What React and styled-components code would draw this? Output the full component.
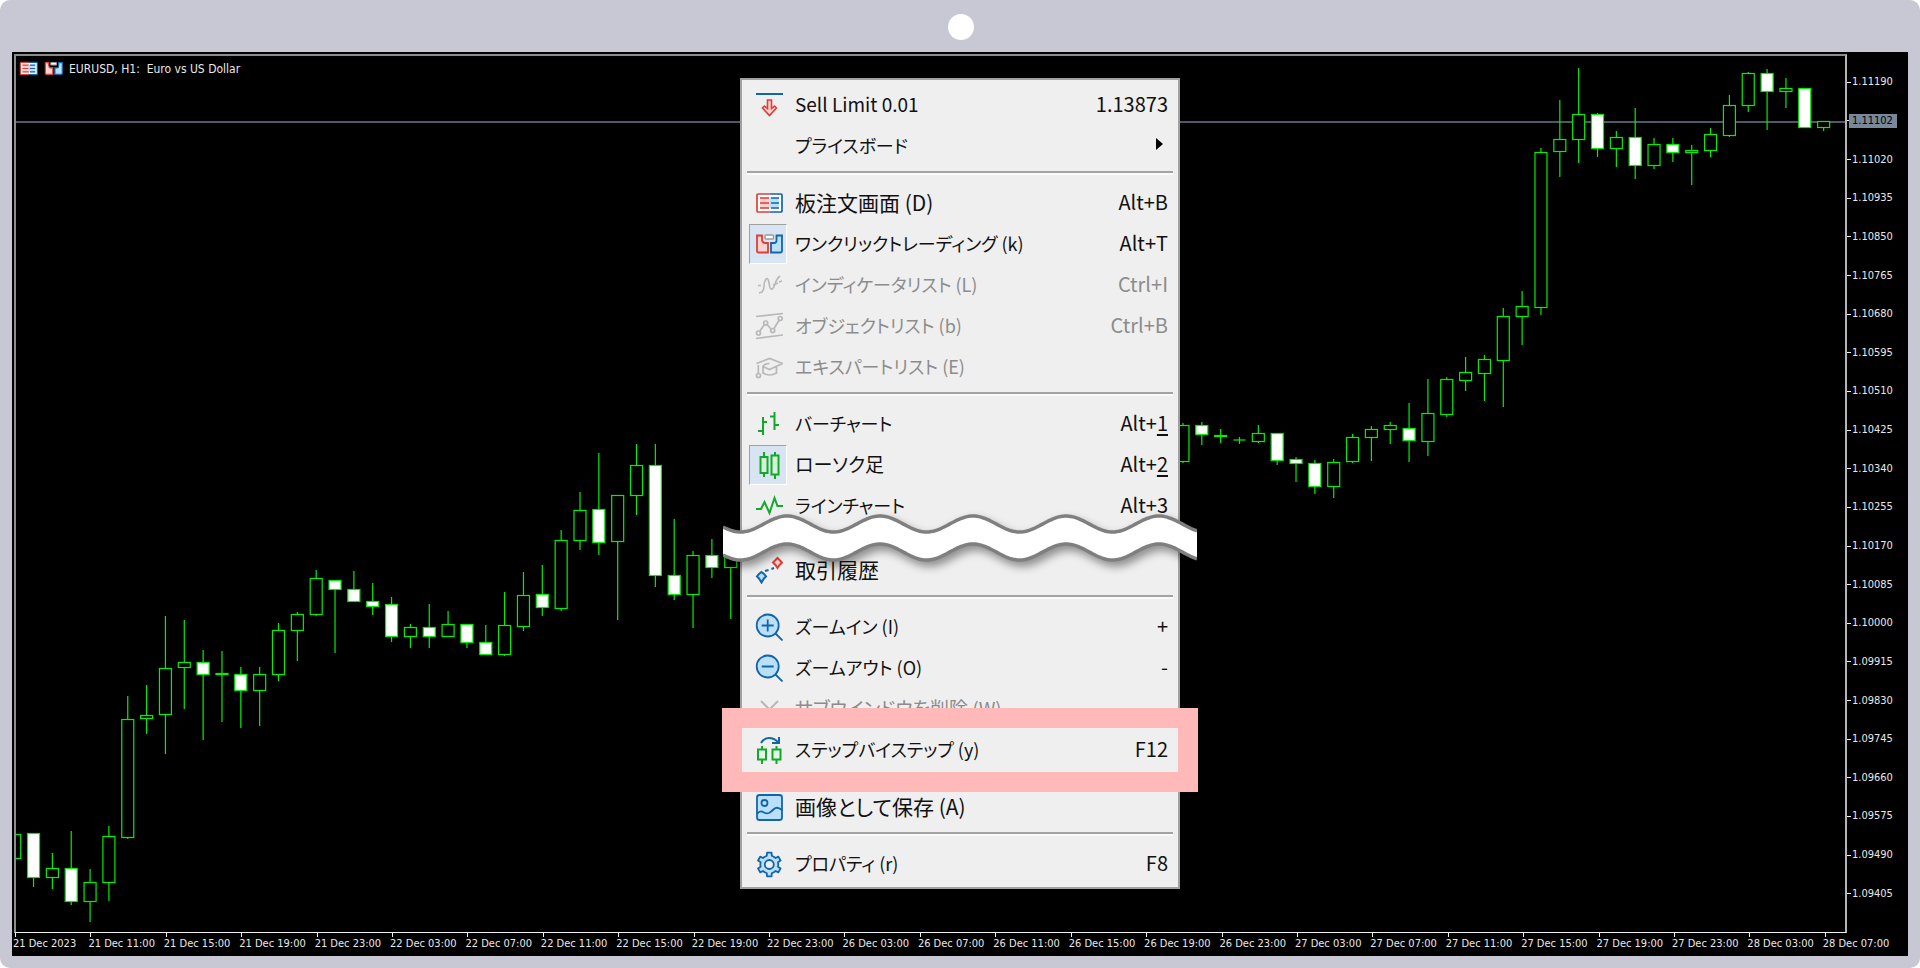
import React from "react";
import styled, { createGlobalStyle, css } from "styled-components";

const BLUE = "#1464a8";
const LIGHT_BLUE = "#b9e0fb";
const RED = "#dc3f3a";
const LIGHT_RED = "#fbd2ce";
const GREEN = "#12a82a";
const GREY = "#b8b8b8";

// [high, top of body, bottom of body, low, 1 = falling candle]
const CANDLES_LEFT = [
  [834, 834, 858, 858, 0],
  [833, 833, 877, 887, 1],
  [853, 868, 877, 889, 0],
  [831, 868, 901, 905, 1],
  [869, 882, 901, 922, 0],
  [826, 836, 882, 901, 0],
  [696, 719, 837, 839, 0],
  [685, 715, 718, 734, 0],
  [616, 668, 714, 754, 0],
  [620, 662, 667, 709, 0],
  [650, 662, 674, 740, 1],
  [651, 673, 674, 722, 0],
  [667, 674, 690, 728, 1],
  [667, 674, 690, 726, 0],
  [623, 630, 674, 681, 0],
  [612, 614, 630, 661, 0],
  [570, 578, 614, 616, 0],
  [580, 580, 589, 653, 1],
  [571, 589, 601, 601, 1],
  [583, 601, 606, 615, 1],
  [597, 604, 636, 642, 1],
  [624, 627, 636, 648, 0],
  [604, 627, 636, 648, 1],
  [611, 624, 636, 636, 0],
  [624, 624, 642, 648, 1],
  [625, 642, 654, 654, 1],
  [592, 625, 654, 656, 0],
  [572, 595, 626, 631, 0],
  [565, 594, 607, 616, 1],
  [530, 540, 608, 611, 0],
  [492, 510, 540, 550, 0],
  [453, 509, 542, 555, 1],
  [495, 495, 541, 620, 0],
  [444, 465, 495, 515, 0],
  [444, 465, 575, 587, 1],
  [519, 575, 594, 600, 1],
  [551, 555, 594, 628, 0],
  [539, 555, 567, 578, 1],
  [555, 555, 567, 619, 0],
];

const CANDLES_RIGHT = [
  [423, 425, 461, 463, 0],
  [422, 425, 434, 445, 1],
  [429, 435, 436, 443, 0],
  [437, 440, 440, 444, 0],
  [425, 433, 441, 443, 0],
  [433, 433, 460, 465, 1],
  [457, 459, 463, 482, 1],
  [460, 463, 486, 494, 1],
  [459, 462, 486, 498, 0],
  [434, 437, 461, 463, 0],
  [426, 429, 437, 461, 0],
  [422, 425, 429, 444, 0],
  [403, 428, 440, 462, 1],
  [379, 413, 441, 456, 0],
  [377, 379, 414, 417, 0],
  [357, 372, 380, 391, 0],
  [355, 359, 373, 401, 0],
  [308, 316, 360, 407, 0],
  [291, 306, 316, 345, 0],
  [148, 152, 307, 315, 0],
  [100, 139, 151, 177, 0],
  [68, 114, 139, 163, 0],
  [113, 114, 148, 157, 1],
  [131, 137, 148, 167, 0],
  [108, 137, 165, 179, 1],
  [138, 144, 165, 169, 0],
  [138, 144, 152, 162, 1],
  [145, 150, 152, 185, 0],
  [128, 134, 150, 157, 0],
  [95, 105, 135, 137, 0],
  [72, 73, 105, 112, 0],
  [69, 73, 91, 130, 1],
  [78, 88, 91, 108, 0],
  [88, 88, 127, 127, 1],
  [121, 121, 127, 131, 0],
];

const TIMES = [
  "21 Dec 2023",
  "21 Dec 11:00",
  "21 Dec 15:00",
  "21 Dec 19:00",
  "21 Dec 23:00",
  "22 Dec 03:00",
  "22 Dec 07:00",
  "22 Dec 11:00",
  "22 Dec 15:00",
  "22 Dec 19:00",
  "22 Dec 23:00",
  "26 Dec 03:00",
  "26 Dec 07:00",
  "26 Dec 11:00",
  "26 Dec 15:00",
  "26 Dec 19:00",
  "26 Dec 23:00",
  "27 Dec 03:00",
  "27 Dec 07:00",
  "27 Dec 11:00",
  "27 Dec 15:00",
  "27 Dec 19:00",
  "27 Dec 23:00",
  "28 Dec 03:00",
  "28 Dec 07:00",
];

// one label every 85 points, the second one is covered by the current price
const PRICES = Array.from({ length: 22 }, (_, i) =>
  i === 1 ? "1.11102" : ((111190 - i * 85) / 100000).toFixed(5)
);

function Candle({ index, data }) {
  const [high, top, bottom, low, down] = data;
  const x = 14.7 + index * 18.843;
  return (
    <g stroke="#00f000" strokeWidth="1.2">
      <line x1={x} x2={x} y1={high} y2={low} />
      {top === bottom ? (
        <line x1={x - 6} x2={x + 6} y1={top} y2={top} />
      ) : (
        <rect
          x={x - 6}
          y={top + 0.5}
          width="12"
          height={bottom - top}
          fill={down ? "#fff" : "#000"}
        />
      )}
    </g>
  );
}

function CandleChart() {
  return (
    <ChartSvg viewBox="16 56 1829 876" preserveAspectRatio="none">
      <rect x="16" y="121" width="1829" height="2" fill="#4d5a66" />
      {CANDLES_LEFT.map((c, i) => (
        <Candle key={i} index={i} data={c} />
      ))}
      {CANDLES_RIGHT.map((c, i) => (
        <Candle key={i} index={i + 62} data={c} />
      ))}
    </ChartSvg>
  );
}

const gearPath = () => {
  const points = [];
  for (let k = 0; k < 6; k++) {
    [
      [-30, 9],
      [-16, 9],
      [-11, 12],
      [11, 12],
      [16, 9],
    ].forEach(([deg, r]) => {
      const a = ((k * 60 + deg - 90) * Math.PI) / 180;
      points.push(
        `${(14.3 + r * Math.cos(a)).toFixed(1)} ${(14.5 + r * Math.sin(a)).toFixed(1)}`
      );
    });
  }
  return `M${points.join("L")}Z`;
};

const ICONS = {
  sellLimit: (
    <>
      <path d="M1 3h27" stroke={BLUE} strokeWidth="2" />
      <path
        d="M12.5 9h4v8.5l3-2.5 2 2-7 7.5-7-7.5 2-2 3 2.5z"
        fill={LIGHT_RED}
        stroke={RED}
        strokeWidth="1.6"
      />
    </>
  ),
  depth: (
    <>
      <path d="M14.5 5H3q-1 0-1 1v16q0 1 1 1h11.5z" fill="#fff" />
      <path d="M14.5 5H26q1 0 1 1v16q0 1-1 1H14.5z" fill="#fff" />
      <path d="M5 8.5h9.5v11H5z" fill={LIGHT_RED} />
      <path d="M14.5 8.5H24v11h-9.5z" fill={LIGHT_BLUE} />
      <path
        d="M14.5 5H3q-1 0-1 1v16q0 1 1 1h11.5M5 9h9M5 14h9M5 19h9"
        stroke={RED}
        strokeWidth="1.7"
      />
      <path
        d="M14.5 5H26q1 0 1 1v16q0 1-1 1H14.5M16 9h8M16 14h8M16 19h8"
        stroke={BLUE}
        strokeWidth="1.7"
      />
    </>
  ),
  oneClick: (
    <>
      <path
        d="M2 5.5h5v4q0 3 3 3.5h3v9.500H3.500Q2 22.500 2 21z"
        fill={LIGHT_RED}
        stroke={RED}
        strokeWidth="1.8"
      />
      <path
        d="M27 5.500h-5.500v5q0 2.500-2.500 2.500h-3v9.500h9.500q1.500 0 1.500-1.500z"
        fill={LIGHT_BLUE}
        stroke={BLUE}
        strokeWidth="1.8"
      />
      <rect x="10" y="5" width="8.5" height="4" rx="1" fill="#fff" stroke="#9a9a9a" strokeWidth="1.5" />
    </>
  ),
  indicators: (
    <path
      d="M4 22l3-1q2-2 2-6t2-7q2-2 3 4t2 6q2 1 4-5t5-8M3 14.5h3M18 14l5-2M24 11l3-1"
      stroke={GREY}
      strokeWidth="1.6"
    />
  ),
  objects: (
    <g stroke={GREY} strokeWidth="1.7">
      <path d="M1 4.5L28 1.5M1 26.5L28 23M4.500 19.500L9.500 12.500M12 12.500L16 17M19 16.500L24 8.500" />
      <circle cx="3.5" cy="21" r="2" />
      <circle cx="10.7" cy="11" r="2" />
      <circle cx="17.7" cy="18.5" r="2" />
      <circle cx="25.2" cy="6.5" r="2" />
    </g>
  ),
  experts: (
    <g stroke={GREY} strokeWidth="1.7">
      <path d="M1.5 10.5L14.5 5.5L27.5 10.5L14.5 16.5L8 13.5V20q6.5 4 13.5 0v-6.5M8 13.500Q9.500 10.500 14.500 10.500M3.300 12v9" />
      <circle cx="3.5" cy="22.5" r="2" />
    </g>
  ),
  bars: (
    <path
      d="M8 7v18M3 21h5M8 12h4M19.5 2v18M15 6.5h4.5M19.5 15h4.5"
      stroke={GREEN}
      strokeWidth="2"
    />
  ),
  candles: (
    <g stroke={GREEN} strokeWidth="2">
      <path d="M9 1v5M9 22v4M20 1v4M20 23v5" />
      <rect x="5.5" y="6" width="7" height="16" fill="#d3f3d6" />
      <rect x="16.5" y="4.5" width="7" height="19" fill="#d3f3d6" />
    </g>
  ),
  line: (
    <path d="M1 17h5l3.500-7 5 11 5-15 3 8H28" stroke={GREEN} strokeWidth="2" />
  ),
  history: (
    <>
      <path d="M10 15q4-1 9-3" stroke={BLUE} strokeWidth="2" strokeDasharray="4 3" />
      <path
        d="M6.500 16l2.500 2 2 2.500-2 2-2.500 4-2.500-4-2-2 2-2.500z"
        fill={LIGHT_BLUE}
        stroke={BLUE}
        strokeWidth="2"
      />
      <path
        d="M22.500 2l2 2 2.500 2.500-2.500 2.500-2 3-2-3-2.500-2.500 2.500-2.500z"
        fill={LIGHT_RED}
        stroke={RED}
        strokeWidth="2"
      />
    </>
  ),
  zoomIn: (
    <g stroke={BLUE} strokeWidth="1.8">
      <circle cx="12.7" cy="12.5" r="11" fill={LIGHT_BLUE} />
      <path d="M12.7 6.5v12M6.7 12.5h12M20.5 20.5l7 7" />
    </g>
  ),
  zoomOut: (
    <g stroke={BLUE} strokeWidth="1.8">
      <circle cx="12.7" cy="12.5" r="11" fill={LIGHT_BLUE} />
      <path d="M6.7 12.5h12M20.5 20.5l7 7" />
    </g>
  ),
  close: <path d="M6 6l17 17M23 6L6 23" stroke={GREY} strokeWidth="2" />,
  step: (
    <>
      <path d="M6 7q3-5 8-5 5 0 9 4M24 1v6h-7" stroke={BLUE} strokeWidth="2" />
      <g stroke={GREEN} strokeWidth="2">
        <path d="M7 10v3M7 24v4M21.5 10v3M21.5 24v4" />
        <rect x="3" y="13.5" width="8" height="10" fill="#e2f8e4" />
        <rect x="17.5" y="13.5" width="8" height="10" fill="#e2f8e4" />
      </g>
    </>
  ),
  picture: (
    <g stroke={BLUE} strokeWidth="1.8">
      <rect x="2" y="2" width="25" height="25" rx="2.5" fill={LIGHT_BLUE} />
      <circle cx="9.5" cy="10" r="3" />
      <path d="M2 21q3-4 6-2t6 1q2-1 5-4t8 1" />
    </g>
  ),
  gear: (
    <g stroke={BLUE} strokeWidth="1.8" strokeLinejoin="round">
      <path d={gearPath()} fill={LIGHT_BLUE} />
      <circle cx="14.3" cy="14.5" r="4.5" fill="#efefef" />
    </g>
  ),
};

function Icon({ name, size = 28 }) {
  return (
    <svg width={size} height={size} viewBox="0 0 28 28" fill="none" aria-hidden="true">
      {ICONS[name]}
    </svg>
  );
}

function MenuItem({ icon, label, script, keys, underline, checked, disabled, submenu, marked }) {
  return (
    <ItemButton type="button" role="menuitem" disabled={disabled}>
      <IconBox $checked={checked}>{icon && <Icon name={icon} />}</IconBox>
      <Label $script={script}>{label}</Label>
      <Keys>
        {keys}
        {underline && <u>{underline}</u>}
      </Keys>
      {submenu && <Arrow />}
      {marked && <Highlight />}
    </ItemButton>
  );
}

const WAVE_WIDTH = 474;

const wavePoints = (middle) => {
  const points = [];
  for (let x = 0; x <= WAVE_WIDTH; x += 2) {
    const y = middle - 8 * Math.cos(((x - 64) / 93) * 2 * Math.PI);
    points.push(`${x} ${y.toFixed(1)}`);
  }
  return points;
};

function TornEdge() {
  const upper = wavePoints(12);
  const lower = wavePoints(40);
  return (
    <Tear>
      <WaveSvg width={WAVE_WIDTH} height="70" viewBox={`0 0 ${WAVE_WIDTH} 70`}>
        <path d={`M${upper.join("L")}L${[...lower].reverse().join("L")}Z`} fill="#fff" />
        <path d={`M${upper.join("L")}`} fill="none" stroke="#7f7f7f" strokeWidth="3.5" />
        <path d={`M${lower.join("L")}`} fill="none" stroke="#7f7f7f" strokeWidth="3.5" />
      </WaveSvg>
    </Tear>
  );
}

export default function App() {
  return (
    <Frame>
      <GlobalStyle />
      <CameraBar>
        <Camera />
      </CameraBar>
      <Screen>
        <Plot>
          <CandleChart />
        </Plot>
        <PriceAxis>
          {PRICES.map((price, i) => (
            <Price key={price} $current={i === 1}>
              <span>{price}</span>
            </Price>
          ))}
        </PriceAxis>
        <TimeAxis>
          {TIMES.map((time) => (
            <Time key={time}>{time}</Time>
          ))}
        </TimeAxis>

        <ChartHeader>
          <HeaderButton type="button" aria-label="板注文画面">
            <Icon name="depth" size={19} />
          </HeaderButton>
          <HeaderButton type="button" aria-label="ワンクリックトレーディング">
            <Icon name="oneClick" size={19} />
          </HeaderButton>
          <Title>{"EURUSD, H1:  Euro vs US Dollar"}</Title>
        </ChartHeader>

        <Menu role="menu">
          <MenuItem icon="sellLimit" label="Sell Limit 0.01" keys="1.13873" />
          <MenuItem label="プライスボード" script="kana" submenu />
          <Separator />
          <MenuItem icon="depth" label="板注文画面 (D)" script="kanji" keys="Alt+B" />
          <MenuItem icon="oneClick" label="ワンクリックトレーディング (k)" script="kana" keys="Alt+T" checked />
          <MenuItem icon="indicators" label="インディケータリスト (L)" script="kana" keys="Ctrl+I" disabled />
          <MenuItem icon="objects" label="オブジェクトリスト (b)" script="kana" keys="Ctrl+B" disabled />
          <MenuItem icon="experts" label="エキスパートリスト (E)" script="kana" disabled />
          <Separator />
          <MenuItem icon="bars" label="バーチャート" script="kana" keys="Alt+" underline="1" />
          <MenuItem icon="candles" label="ローソク足" keys="Alt+" underline="2" checked />
          <MenuItem icon="line" label="ラインチャート" script="kana" keys="Alt+" underline="3" />
          <TornEdge />
          <MenuItem icon="history" label="取引履歴" script="kanji" />
          <Separator />
          <MenuItem icon="zoomIn" label="ズームイン (I)" script="kana" keys="+" />
          <MenuItem icon="zoomOut" label="ズームアウト (O)" script="kana" keys="-" />
          <MenuItem icon="close" label="サブウインドウを削除 (W)" disabled />
          <MenuItem icon="step" label="ステップバイステップ (y)" script="kana" keys="F12" marked />
          <Separator />
          <MenuItem icon="picture" label="画像として保存 (A)" script="kanji" />
          <Separator />
          <MenuItem icon="gear" label="プロパティ (r)" script="kana" keys="F8" />
        </Menu>
      </Screen>
    </Frame>
  );
}

const GlobalStyle = createGlobalStyle`
  * {
    box-sizing: border-box;
  }
  body {
    margin: 0;
    background: #fff;
  }
`;

const Frame = styled.div`
  display: flex;
  flex-direction: column;
  min-height: 100vh;
  padding: 0 12px 12px;
  border-radius: 10px;
  background: #c8c7d4;
`;

const CameraBar = styled.div`
  display: flex;
  justify-content: center;
  align-items: center;
  height: 52px;
  padding: 2px 0 0 2px;
`;

const Camera = styled.div`
  width: 26px;
  height: 26px;
  border-radius: 50%;
  background: #fff;
`;

const Screen = styled.main`
  position: relative;
  flex: 1;
  display: grid;
  grid-template-columns: 1fr 61px;
  grid-template-rows: 1fr 23px;
  min-height: 860px;
  padding: 2px 0 0 2px;
  background: #000;
  color: #e8e8e8;
  font-family: "DejaVu Sans Condensed", "DejaVu Sans", sans-serif;
  font-size: 11px;
  line-height: 14px;
`;

const Plot = styled.div`
  min-height: 0;
  border: 2px solid #8c8c8c;
  border-right-color: #b4b4b4;
  border-bottom: 1px solid #f0f0f0;
`;

const ChartSvg = styled.svg`
  display: block;
  width: 100%;
  height: 100%;
`;

const PriceAxis = styled.div`
  display: flex;
  flex-direction: column;
  padding: 9px 0 20px;
`;

const Price = styled.div`
  flex: 1;
  display: flex;
  align-items: center;

  &::before {
    content: "";
    width: ${(p) => (p.$current ? 2 : 4)}px;
    height: 1px;
    background: #f0f0f0;
  }

  span {
    padding-left: ${(p) => (p.$current ? 3 : 1)}px;
    padding-right: 4px;
    color: ${(p) => (p.$current ? "#000" : "inherit")};
    background: ${(p) => (p.$current ? "#788799" : "none")};
  }
`;

const TimeAxis = styled.div`
  grid-column: 1 / -1;
  display: flex;
  margin: 0 10px 0 -1px;
`;

const Time = styled.div`
  flex: 1 1 0;
  white-space: nowrap;

  &::before {
    content: "";
    display: block;
    width: 1px;
    height: 4px;
    margin-left: 2px;
    background: #f0f0f0;
  }
`;

const ChartHeader = styled.header`
  position: absolute;
  top: 7px;
  left: 7px;
  display: flex;
  align-items: center;
  gap: 6px;
`;

const HeaderButton = styled.button`
  display: flex;
  padding: 0;
  border: 0;
  background: none;
`;

const Title = styled.h1`
  margin: 0;
  font-size: 12px;
  font-weight: 400;
  white-space: pre;
`;

const Menu = styled.div`
  position: absolute;
  top: 26px;
  left: 50%;
  width: 440px;
  padding: 4px 0 3px;
  transform: translateX(-50%);
  border: 2px solid #a0a0a0;
  background: #efefef;
  font-family: "Noto Sans CJK JP", sans-serif;
`;

const ItemButton = styled.button`
  position: relative;
  display: flex;
  align-items: center;
  gap: 8px;
  width: 100%;
  height: 41px;
  padding: 0 10px 0 7px;
  border: 0;
  background: none;
  color: #111;
  font-family: inherit;
  font-size: 20px;
  line-height: 28px;
  text-align: left;

  &:disabled {
    color: #8c8c8c;
  }
`;

const IconBox = styled.span`
  display: flex;
  align-items: center;
  justify-content: flex-end;
  width: 38px;
  height: 40px;
  padding-right: 4px;

  ${(p) =>
    p.$checked &&
    css`
      padding-right: 3px;
      border: 1px solid;
      border-color: #a0a0a0 #fff #fff #a0a0a0;
      background: #d8e4f1;
    `}
`;

const LABEL_SIZES = { kana: 18, kanji: 21 };

const Label = styled.span`
  flex: 1;
  padding-bottom: 2px;
  font-size: ${(p) => LABEL_SIZES[p.$script] || 19}px;
  white-space: nowrap;
  font-feature-settings: "palt";
`;

const Keys = styled.span`
  padding-bottom: 2px;

  u {
    text-underline-offset: 3px;
  }
`;

const Arrow = styled.span`
  margin: 0 5px 3px 0;
  border-style: solid;
  border-width: 6px 0 6px 7px;
  border-color: transparent transparent transparent #000;
`;

const Separator = styled.div`
  height: 4px;
  margin: 5px 5px 7px;
  border-top: 2px solid #a3a3a3;
  border-bottom: 2px solid #fafafa;
`;

const Tear = styled.div`
  position: relative;
  z-index: 1;
  height: 23px;
`;

const WaveSvg = styled.svg`
  position: absolute;
  top: -14px;
  left: -19px;
  filter: drop-shadow(3px 5px 4px rgba(0, 0, 0, 0.4));
`;

const Highlight = styled.span`
  position: absolute;
  z-index: 1;
  inset: -21px -20px -22px;
  border: 20px solid #ffb9b9;
  pointer-events: none;
`;
